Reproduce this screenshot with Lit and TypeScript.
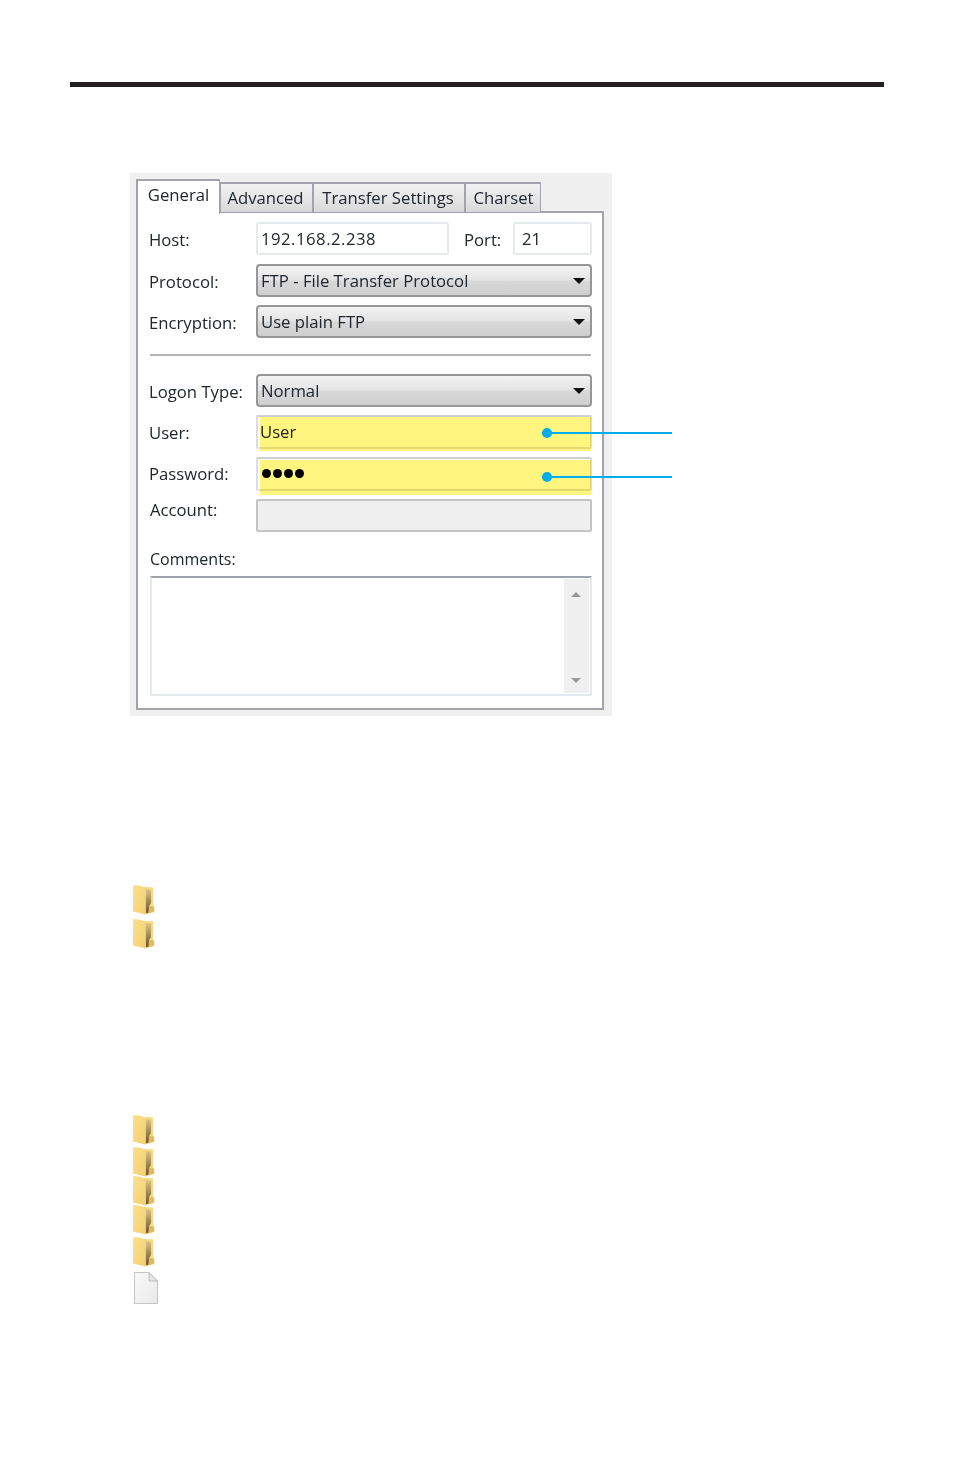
import { LitElement, html, css, svg } from "lit";
import { customElement } from "lit/decorators.js";

const folder = () => html`<svg class="folder" viewBox="0 0 22 30" width="22" height="30">
  ${svg`
  <defs>
    <linearGradient id="leaf" x1="0" y1="0" x2="1" y2="1"><stop offset="0" stop-color="#fbe08e"/><stop offset="1" stop-color="#f4cf70"/></linearGradient>
    <linearGradient id="dark" x1="0" y1="0" x2="0" y2="1"><stop offset="0" stop-color="#e0c585"/><stop offset="0.5" stop-color="#a08a58"/><stop offset="1" stop-color="#6a5630"/></linearGradient>
  </defs>
  <path d="M12 2 L20 2.5 L20 21 L21.4 21.5 L21.4 27 L12 29.5 Z" fill="#f6d87f"/>
  <path d="M12.5 4 L18 5 L18 18 L16 21 L16 27.5 L12.5 28.5 Z" fill="url(#dark)"/>
  <path d="M16 21 L21 21.5 L21 26.8 L15.5 28 Z" fill="#e0bc68"/>
  <path d="M0 0 L6 0.6 L12.8 2.5 L12.8 29.6 L0 26.5 Z" fill="url(#leaf)"/>
  `}
</svg>`;

const file = () => html`<svg class="file" viewBox="0 0 24 32" width="24" height="32">
  ${svg`
  <defs><linearGradient id="paper" x1="0" y1="0" x2="1" y2="1"><stop offset="0" stop-color="#fafafa"/><stop offset="1" stop-color="#e8e8e8"/></linearGradient></defs>
  <path d="M0.5 0.5 H15 L23.5 9 V31.5 H0.5 Z" fill="url(#paper)" stroke="#c4c4c4"/>
  <path d="M15 0.5 V9 H23.5 Z" fill="#e4e4e4" stroke="#bdbdbd"/>
  `}
</svg>`;

const arrow = () => html`<span class="arrow"></span>`;

@customElement("app-root")
export class AppRoot extends LitElement {
  static styles = css`
    :host { display: block; width: 954px; height: 1474px; background: #fff; font-family: "Open Sans", "Liberation Sans", sans-serif; color: #20262e; position: relative; overflow: hidden; }
    .rule { height: 5px; background: #231f20; margin: 82px 70px 0; }
    .panel { position: relative; width: 482px; height: 543px; margin: 86px 0 0 130px; padding: 6px 8px 0 6px; box-sizing: border-box; background: #f0f0f0; }
    .tabs { display: flex; align-items: flex-end; height: 33px; font-size: 16.7px; position: relative; z-index: 1; }
    .tab { height: 30px; box-sizing: border-box; border: 2px solid #a3a3ab; border-left-width: 1px; border-right-width: 1px; border-bottom: 0; background: linear-gradient(#f2f2f2, #e6e6e6 50%, #d8d8d8); display: flex; align-items: center; justify-content: center; padding-bottom: 1px; filter: blur(.3px); }
    .tab.active { width: 84px; height: 35px; background: #fff; border-left-width: 2px; margin-bottom: -2px; padding-bottom: 7px; }
    .tab.adv { width: 93px; padding-right: 2px; }
    .tab.xfer { width: 152px; padding-right: 2px; }
    .tab.chr { width: 76px; padding-left: 1px; }
    .pane { height: 499px; box-sizing: border-box; border: 2px solid #a3a3ab; background: #fff; margin-top: -1px; padding: 9px 10px 0 11px; font-size: 16.7px; }
    .row { position: relative; display: flex; align-items: center; height: 33px; margin-top: 8px; }
    .row.first { margin-top: 0; }
    .row.wide { margin-top: 9px; }
    .row.tall { height: 34px; }
    .label { width: 107px; flex: none; position: relative; top: 1px; filter: blur(.3px); }
    .label.up { top: 0; }
    .field { position: relative; box-sizing: border-box; height: 100%; background: #fff; border: 2px solid #e6eaef; border-radius: 2px; padding-left: 3px; display: flex; align-items: center; flex: 1; filter: blur(.3px); }
    .field.host { flex: none; width: 193px; letter-spacing: .5px; }
    .port-label { margin-left: 15px; width: 49px; position: relative; top: 1px; filter: blur(.3px); }
    .field.port { flex: none; width: 79px; padding-left: 7px; }
    .field.mark { border-color: #cfcfcf #dcdcdc #e2e2e2 #dcdcdc; padding-left: 2px; }
    .hl { position: absolute; left: 2px; top: 0; right: -1px; bottom: -4px; background: #fff57f; mix-blend-mode: multiply; }
    .hl.b { top: 1px; bottom: -6px; }
    .field.off { background: #efefef; border-color: #c4c4c4; }
    .select { position: relative; box-sizing: border-box; height: 100%; flex: 1; border: 2px solid #979797; border-radius: 4px; background: linear-gradient(#f3f3f3, #e4e4e4 48%, #d8d8d8 52%, #cfcfcf); padding-left: 3px; display: flex; align-items: center; filter: blur(.3px); }
    .arrow { position: absolute; right: 5px; top: 12px; width: 0; height: 0; border: 6px solid transparent; border-top: 6px solid #111; border-bottom: 0; }
    .sep { height: 1.5px; background: #b4b4b4; margin: 16px 1px 18px 1px; }
    .dots { display: flex; gap: 2px; padding-left: 2px; position: relative; top: 0; }
    .dots i { width: 9px; height: 9px; border-radius: 50%; background: #000; display: block; }
    .callout { position: absolute; left: 393px; top: 17px; width: 130px; height: 2.5px; background: #00aeef; z-index: 2; }
    .callout::before { content: ""; position: absolute; left: 0; top: -4px; width: 10px; height: 10px; border-radius: 50%; background: #00aeef; }
    .callout.low { top: 19px; height: 2px; }
    .account-label { position: relative; top: -6px; left: 1px; }
    .comments { height: 20px; line-height: 20px; margin: 17px 0 0 1px; font-size: 16px; filter: blur(.3px); }
    .memo { box-sizing: border-box; height: 120px; margin: 7px 0 0 1px; border: 2px solid #e6eaef; border-top-color: #9fa3a9; position: relative; padding: 1px; display: flex; justify-content: flex-end; filter: blur(.3px); }
    .scroll { width: 25px; background: #f0f0f0; position: relative; }
    .scroll::before, .scroll::after { content: ""; position: absolute; left: 7px; border: 5.5px solid transparent; }
    .scroll::before { top: 13px; border-bottom: 5px solid #9a9a9a; border-top: 0; }
    .scroll::after { bottom: 10px; border-top: 5px solid #9a9a9a; border-bottom: 0; }
    .icons { display: flex; flex-direction: column; margin-left: 133px; }
    .icons svg { display: block; filter: blur(.4px); }
    .g1 { margin-top: 169px; gap: 4px; }
    .g2 { margin-top: 166px; }
    .g2 svg:nth-child(2) { margin-top: 2px; }
    .g2 svg:nth-child(3) { margin-top: -1px; }
    .g2 svg:nth-child(4) { margin-top: -1px; }
    .g2 svg:nth-child(5) { margin-top: 2px; }
    .g2 .file { margin: 5px 0 0 1px; }
  `;

  render() {
    return html`
      <div class="rule"></div>
      <section class="panel">
        <div class="tabs">
          <div class="tab active">General</div>
          <div class="tab adv">Advanced</div>
          <div class="tab xfer">Transfer Settings</div>
          <div class="tab chr">Charset</div>
        </div>
        <div class="pane">
          <div class="row first">
            <span class="label">Host:</span>
            <div class="field host">192.168.2.238</div>
            <span class="port-label">Port:</span>
            <div class="field port">21</div>
          </div>
          <div class="row wide"><span class="label">Protocol:</span><div class="select">FTP - File Transfer Protocol${arrow()}</div></div>
          <div class="row"><span class="label">Encryption:</span><div class="select">Use plain FTP${arrow()}</div></div>
          <div class="sep"></div>
          <div class="row first"><span class="label">Logon Type:</span><div class="select">Normal${arrow()}</div></div>
          <div class="row tall"><span class="label">User:</span>
            <div class="field mark">User<span class="hl"></span></div>
            <span class="callout"></span>
          </div>
          <div class="row tall"><span class="label up">Password:</span>
            <div class="field mark"><span class="dots"><i></i><i></i><i></i><i></i></span><span class="hl b"></span></div>
            <span class="callout low"></span>
          </div>
          <div class="row"><span class="label account-label">Account:</span><div class="field off"></div></div>
          <div class="comments">Comments:</div>
          <div class="memo"><div class="scroll"></div></div>
        </div>
      </section>
      <div class="icons g1">${folder()}${folder()}</div>
      <div class="icons g2">${folder()}${folder()}${folder()}${folder()}${folder()}${file()}</div>
    `;
  }
}
